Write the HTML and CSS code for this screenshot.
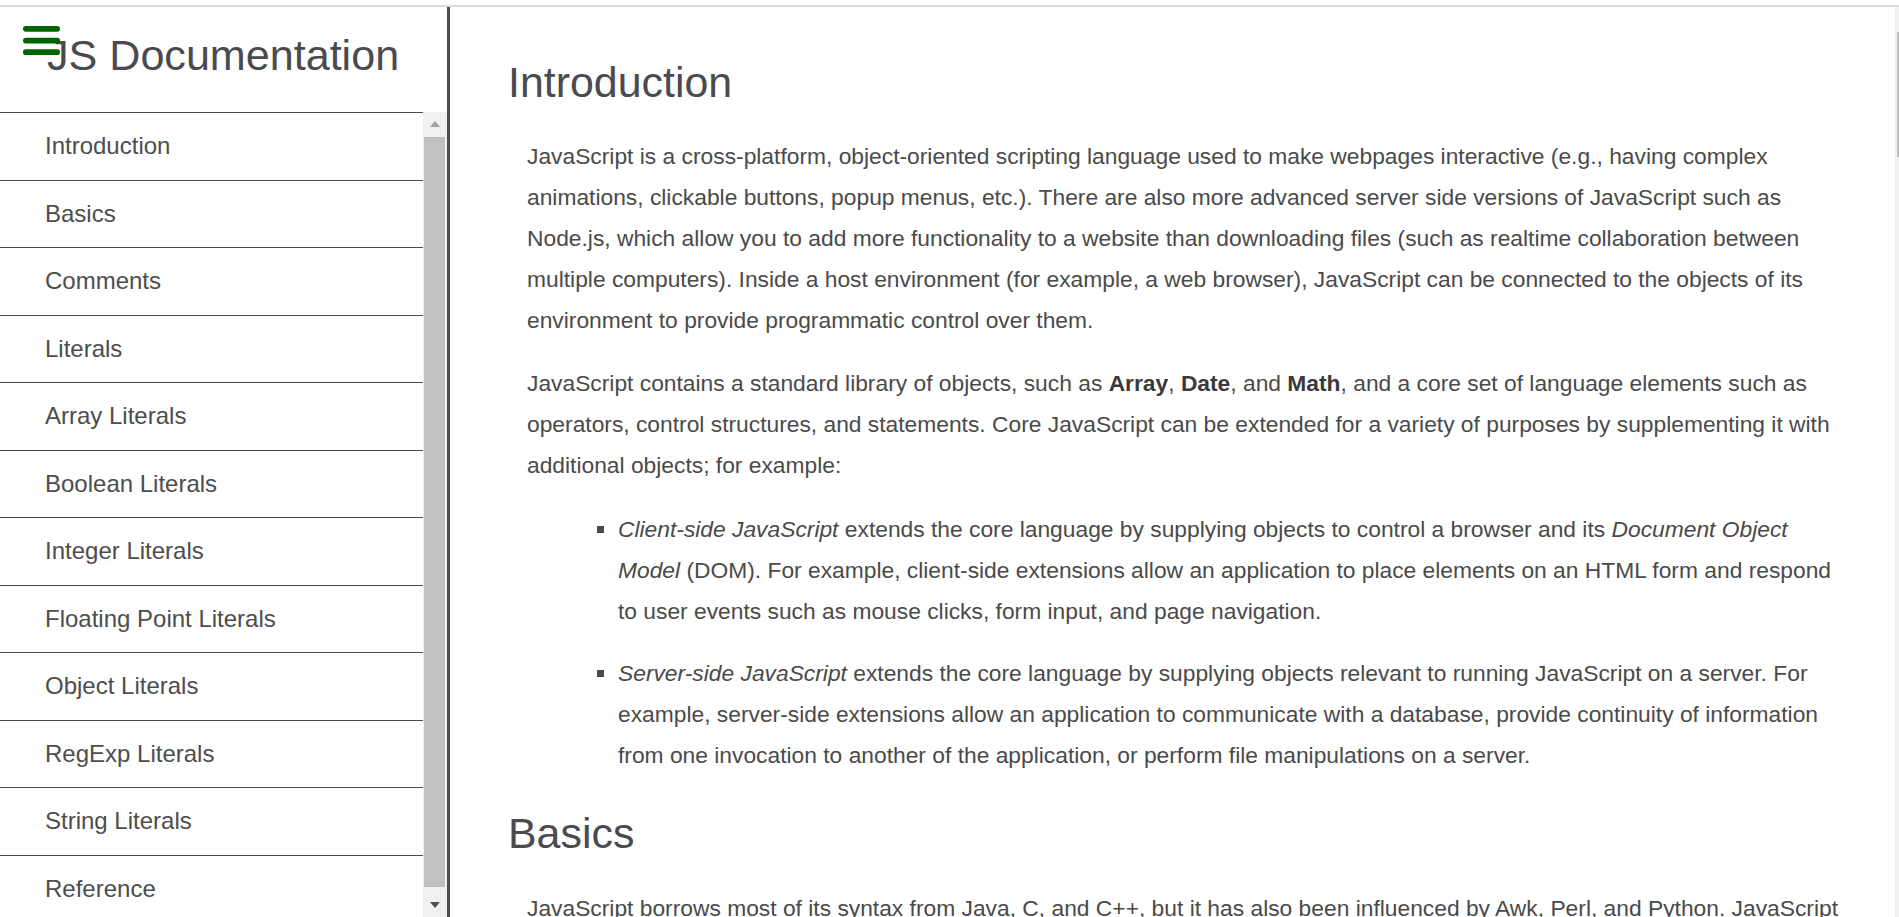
FILE: index.html
```html
<!DOCTYPE html>
<html lang="en">
<head>
<meta charset="utf-8">
<title>JS Documentation</title>
<link rel="stylesheet" href="styles.css">
</head>
<body>
<div class="frame">
  <nav class="sidebar" id="navbar">
    <header class="side-head">
      <button class="menu-btn" aria-label="Toggle menu">
        <svg viewBox="0 0 37 29" width="37" height="29">
          <rect x="0" y="0" width="37" height="5.7" rx="2.85" fill="#006400"/>
          <rect x="0" y="11.7" width="37" height="5.7" rx="2.85" fill="#006400"/>
          <rect x="0" y="23.3" width="37" height="5.7" rx="2.85" fill="#006400"/>
        </svg>
      </button>
      <h1 class="side-title">JS Documentation</h1>
    </header>
    <div class="nav-wrap">
      <ul class="nav-list">
        <li><a class="nav-link" href="#Introduction">Introduction</a></li>
        <li><a class="nav-link" href="#Basics">Basics</a></li>
        <li><a class="nav-link" href="#Comments">Comments</a></li>
        <li><a class="nav-link" href="#Literals">Literals</a></li>
        <li><a class="nav-link" href="#Array_Literals">Array Literals</a></li>
        <li><a class="nav-link" href="#Boolean_Literals">Boolean Literals</a></li>
        <li><a class="nav-link" href="#Integer_Literals">Integer Literals</a></li>
        <li><a class="nav-link" href="#Floating_Point_Literals">Floating Point Literals</a></li>
        <li><a class="nav-link" href="#Object_Literals">Object Literals</a></li>
        <li><a class="nav-link" href="#RegExp_Literals">RegExp Literals</a></li>
        <li><a class="nav-link" href="#String_Literals">String Literals</a></li>
        <li><a class="nav-link" href="#Reference">Reference</a></li>
      </ul>
      <div class="nav-scroll" aria-hidden="true">
        <span class="scroll-btn">
          <svg width="10" height="6" viewBox="0 0 10 6"><path d="M0 6 L5 0 L10 6 Z" fill="#a3a3a3"/></svg>
        </span>
        <span class="scroll-thumb"></span>
        <span class="scroll-btn">
          <svg width="10" height="6" viewBox="0 0 10 6"><path d="M0 0 L10 0 L5 6 Z" fill="#505050"/></svg>
        </span>
      </div>
    </div>
  </nav>

  <main class="main" id="main-doc">
    <section class="main-section" id="Introduction">
      <h2 class="section-title">Introduction</h2>
      <p class="text">JavaScript is a cross-platform, object-oriented scripting language used to make webpages interactive (e.g., having complex animations, clickable buttons, popup menus, etc.). There are also more advanced server side versions of JavaScript such as Node.js, which allow you to add more functionality to a website than downloading files (such as realtime collaboration between multiple computers). Inside a host environment (for example, a web browser), JavaScript can be connected to the objects of its environment to provide programmatic control over them.</p>
      <p class="text">JavaScript contains a standard library of objects, such as <b>Array</b>, <b>Date</b>, and <b>Math</b>, and a core set of language elements such as operators, control structures, and statements. Core JavaScript can be extended for a variety of purposes by supplementing it with additional objects; for example:</p>
      <ul class="bullets">
        <li><i>Client-side JavaScript</i> extends the core language by supplying objects to control a browser and its <i>Document Object Model</i> (DOM). For example, client-side extensions allow an application to place elements on an HTML form and respond to user events such as mouse clicks, form input, and page navigation.</li>
        <li><i>Server-side JavaScript</i> extends the core language by supplying objects relevant to running JavaScript on a server. For example, server-side extensions allow an application to communicate with a database, provide continuity of information from one invocation to another of the application, or perform file manipulations on a server.</li>
      </ul>
    </section>
    <section class="main-section" id="Basics">
      <h2 class="section-title">Basics</h2>
      <p class="text">JavaScript borrows most of its syntax from Java, C, and C++, but it has also been influenced by Awk, Perl, and Python. JavaScript is case-sensitive and uses the Unicode character set. For example, the word Früh (which means "early" in German) could be used as a variable name.</p>
    </section>
  </main>

  <div class="page-scroll" aria-hidden="true"><div class="page-thumb"></div></div>
</div>
</body>
</html>
```

FILE: styles.css
```css
html, body {
  margin: 0;
  height: 100%;
  overflow: hidden;
  background: #fff;
}

body {
  font-family: "Liberation Sans", Arial, sans-serif;
  color: #4a4a4a;
}

.frame {
  margin-top: 5px;
  border-top: 2px solid #dcdcdc;
  height: calc(100vh - 7px);
  display: flex;
}

/* ---------- sidebar ---------- */
.sidebar {
  position: relative;
  flex: none;
  width: 447px;
  border-right: 3px solid #4a4a4f;
  display: flex;
  flex-direction: column;
}

.side-head {
  flex: none;
  height: 105px;
  box-sizing: border-box;
  padding: 27px 0 0 47px;
}

.side-title {
  margin: 0;
  font-size: 43.1px;
  line-height: 1;
  font-weight: normal;
  color: #4a4a4f;
}

.menu-btn {
  position: absolute;
  left: 23px;
  top: 19px;
  width: 37px;
  height: 29px;
  padding: 0;
  border: 0;
  background: none;
  line-height: 0;
}

.nav-wrap {
  flex: 1;
  min-height: 0;
  display: flex;
}

.nav-list {
  flex: 1;
  min-width: 0;
  overflow: hidden;
  margin: 0;
  padding: 0;
  list-style: none;
}

.nav-link {
  display: flex;
  align-items: center;
  height: 67.5px;
  box-sizing: border-box;
  border-top: 1px solid #4a4a4a;
  padding-left: 45px;
  font-size: 24px;
  color: #4d4d4d;
  text-decoration: none;
}

.nav-scroll {
  flex: none;
  width: 24px;
  background: #f1f1f1;
  display: flex;
  flex-direction: column;
}

.scroll-btn {
  flex: none;
  height: 24px;
  display: flex;
  align-items: center;
  justify-content: center;
  margin-right: 1px;
}

.scroll-thumb {
  flex: 1;
  margin: 1px 2px 6px 1px;
  background: #c1c1c1;
}

/* ---------- main ---------- */
.main {
  flex: 1;
  min-width: 0;
  overflow: hidden;
  padding: 17px 50px 0 58px;
}

.section-title {
  margin: 36.6px 0 32.5px;
  font-size: 42.9px;
  line-height: 1;
  font-weight: normal;
  color: #4a4a4f;
}

.text {
  margin: 22.8px 0 22.8px 19px;
  font-size: 22.8px;
  line-height: 40.9px;
}

.text b {
  color: #3a3a3a;
}

.bullets {
  margin: 22.8px 0 22.8px 19px;
  padding-left: 91px;
  list-style: square;
  font-size: 22.8px;
  line-height: 40.9px;
}

.bullets li + li {
  margin-top: 21.4px;
}

/* ---------- page scrollbar strip ---------- */
.page-scroll {
  flex: none;
  width: 4px;
  background: #f1f1f1;
}

.page-thumb {
  margin: 25px 0 0 2px;
  width: 2px;
  height: 125px;
  background: #c1c1c1;
}
```
